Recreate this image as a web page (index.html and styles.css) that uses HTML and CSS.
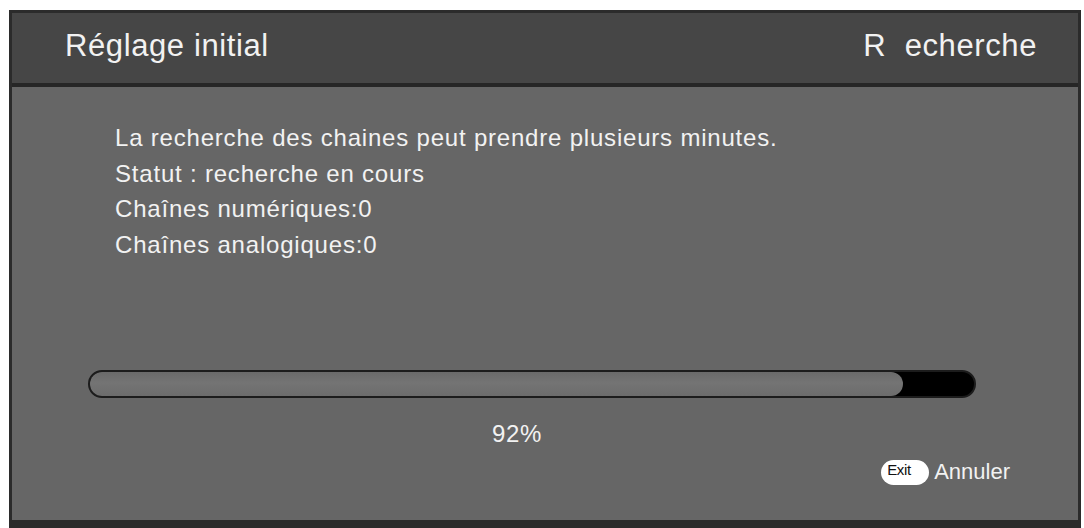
FILE: index.html
```html
<!DOCTYPE html>
<html>
<head>
<meta charset="UTF-8">
<title>Réglage initial</title>
<link rel="stylesheet" href="styles.css">
</head>
<body>
	<div class="screen">
		<div class="screen-header">
			<div class="screen-title">Réglage initial</div>
			<div class="screen-step">R&nbsp;&nbsp;echerche</div>
		</div>
		<div class="screen-body">
			<div class="scan-info">
				<div>La recherche des chaines peut prendre plusieurs minutes.</div>
				<div>Statut : recherche en cours</div>
				<div>Chaînes numériques:0</div>
				<div>Chaînes analogiques:0</div>
			</div>
			<div class="progress">
				<div class="progress-fill" style="width: 92%"></div>
			</div>
			<div class="progress-label">92%</div>
			<div class="hint">
				<span class="key-exit">Exit</span>
				<span class="hint-text">Annuler</span>
			</div>
		</div>
	</div>
</body>
</html>
```

FILE: styles.css
```css
body {
	margin: 0;
	background: #fff;
	font-family: "Liberation Sans", Arial, sans-serif;
	color: #f2f2f2;
}

.screen {
	margin: 10px 0 0 9px;
	width: 1072px;
	height: 518px;
	box-sizing: border-box;
	border: 3px solid #2b2b2b;
	border-bottom-width: 8px;
	background: #666;
	display: flex;
	flex-direction: column;
}

.screen-header {
	height: 66px;
	flex: none;
	background: #464646;
	border-bottom: 4px solid #262626;
	display: flex;
	align-items: center;
	justify-content: space-between;
	padding: 0 41px 4px 53px;
	box-sizing: content-box;
	font-size: 31px;
	letter-spacing: 0.6px;
}

.screen-body {
	flex: 1;
	padding: 33px 0 0 76px;
	display: flex;
	flex-direction: column;
}

.scan-info {
	font-size: 24px;
	line-height: 35.5px;
	letter-spacing: 0.8px;
	padding-left: 27px;
}

.progress {
	margin-top: 108px;
	width: 888px;
	height: 28px;
	box-sizing: border-box;
	border: 2px solid #1c1c1c;
	border-radius: 14px;
	background: #000;
	overflow: hidden;
}

.progress-fill {
	height: 100%;
	border-radius: 0 12px 12px 0;
	background: linear-gradient(#6a6a6a, #747474 45%, #6c6c6c);
}

.progress-label {
	margin: 24px 0 0 404px;
	font-size: 24px;
	line-height: 24px;
	letter-spacing: 0.6px;
}

.hint {
	margin-top: 13px;
	padding-right: 68px;
	display: flex;
	justify-content: flex-end;
	align-items: center;
	gap: 5px;
}

.key-exit {
	display: inline-block;
	width: 48px;
	height: 25px;
	border-radius: 13px;
	background: #fff;
	color: #111;
	font-size: 15px;
	line-height: 20px;
	text-indent: 6px;
	letter-spacing: -0.3px;
}

.hint-text {
	font-size: 22px;
}
```
